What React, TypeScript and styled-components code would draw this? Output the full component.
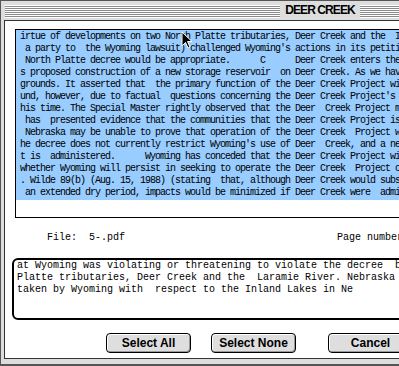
import styled, { createGlobalStyle } from "styled-components";

const GlobalStyle = createGlobalStyle`
  html, body {
    margin: 0;
    padding: 0;
    background: #ffffff;
    overflow: hidden;
  }
`;

// --- WINDOW FRAME ---
const Window = styled.div`
  width: 640px;
  height: 366px;
  box-sizing: border-box;
  background: #dddddd;
  border: 1px solid #555555;
  border-bottom-width: 2px;
  padding: 0 3px 5px 3px;
  display: flex;
  flex-direction: column;
`;

const TitleBar = styled.div`
  height: 19px;
  display: flex;
  align-items: center;
  padding: 0 1px;
`;

const Stripes = styled.div`
  flex: 1;
  height: 13px;
  margin-top: 1px;
  background: repeating-linear-gradient(
    to bottom,
    #ffffff 0px,
    #ffffff 1px,
    #8a8a8a 1px,
    #8a8a8a 2px
  );
`;

const Title = styled.div`
  padding: 0 5px;
  font-family: "Liberation Sans", Arial, sans-serif;
  font-weight: 700;
  font-size: 12px;
  letter-spacing: -0.9px;
  color: #000;
  line-height: 19px;
`;

const Content = styled.div`
  flex: 1;
  background: #ffffff;
  border: 1px solid #333333;
  display: flex;
  flex-direction: column;
  font-family: "Liberation Mono", "Courier New", monospace;
  font-size: 10px;
  color: #000;
`;

// --- FOUND TEXT PANEL ---
const TextPanel = styled.div`
  position: relative;
  margin: 8px 10px 0 10px;
  height: 189px;
  box-sizing: border-box;
  border: 1px solid #000;
  background: #ffffff;
`;

const Selection = styled.div`
  background: #99ccff;
  padding: 1px 0 1px 4px;
`;

const CondensedLine = styled.div`
  height: 12px;
  line-height: 12px;
  white-space: pre;
  letter-spacing: -1px;
`;

const Cursor = styled.svg`
  position: absolute;
  left: 165px;
  top: 1px;
`;

// --- FILE ROW ---
const FileRow = styled.div`
  display: flex;
  margin-top: 14px;
  padding-left: 42px;
  height: 12px;
  line-height: 12px;
  white-space: pre;
`;

const FileName = styled.span`
  width: 290px;
`;

// --- CONTEXT FIELD ---
const ContextBox = styled.div`
  margin: 14px 0 0 7px;
  width: 640px;
  height: 62px;
  box-sizing: border-box;
  border: 2px solid #000;
  border-radius: 6px;
  padding: 0 3px;
`;

const Line = styled.div`
  height: 12px;
  line-height: 12px;
  white-space: pre;
`;

// --- BUTTONS ---
const ButtonRow = styled.div`
  display: flex;
  margin-top: 13px;
  padding-left: 101px;
`;

const Button = styled.button<{ $gap?: number }>`
  width: 85px;
  height: 20px;
  margin-left: ${(p) => p.$gap ?? 0}px;
  padding: 0;
  border: 1px solid #000;
  border-radius: 4px;
  background: #dedede;
  box-shadow: inset 1px 1px 0 #ffffff, inset -1px -1px 0 #9a9a9a;
  font-family: "Liberation Sans", Arial, sans-serif;
  font-weight: 700;
  font-size: 12px;
  color: #000;
  line-height: 18px;
`;

const foundLines = [
  "irtue of developments on two North Platte tributaries, Deer Creek and the  I",
  " a party to  the Wyoming lawsuit) challenged Wyoming's actions in its petiti",
  " North Platte decree would be appropriate.      C      Deer Creek enters the",
  "s proposed construction of a new storage reservoir  on Deer Creek. As we hav",
  "grounds. It asserted that  the primary function of the Deer Creek Project wi",
  "und, however, due to factual  questions concerning the Deer Creek Project's",
  "his time. The Special Master rightly observed that the Deer  Creek Project m",
  " has  presented evidence that the communities that the Deer Creek Project is",
  " Nebraska may be unable to prove that operation of the Deer Creek  Project w",
  "he decree does not currently restrict Wyoming's use of Deer  Creek, and a ne",
  "t is  administered.      Wyoming has conceded that the Deer Creek Project wi",
  "whether Wyoming will persist in seeking to operate the Deer Creek  Project c",
  ". Wilde 89(b) (Aug. 15, 1988) (stating  that, although Deer Creek would subs",
  " an extended dry period, impacts would be minimized if Deer Creek were  admi",
];

const contextLines = [
  "at Wyoming was violating or threatening to violate the decree  b",
  "Platte tributaries, Deer Creek and the  Laramie River. Nebraska ",
  "taken by Wyoming with  respect to the Inland Lakes in Ne",
];

const App = () => {
  return (
    <>
      <GlobalStyle />
      <Window>
        <TitleBar>
          <Stripes />
          <Title>DEER CREEK</Title>
          <Stripes />
        </TitleBar>
        <Content>
          <TextPanel>
            <Selection>
              {foundLines.map((line, idx) => (
                <CondensedLine key={idx}>{line}</CondensedLine>
              ))}
            </Selection>
            <Cursor width="12" height="19" viewBox="0 0 12 19">
              <path
                d="M1 1 L1 15 L4.5 11.5 L7 17 L9 16 L6.5 10.5 L11 10.5 Z"
                fill="#000"
                stroke="#fff"
                strokeWidth="1"
              />
            </Cursor>
          </TextPanel>

          <FileRow>
            <FileName>File:  5-.pdf</FileName>
            <span>Page number</span>
          </FileRow>

          <ContextBox>
            {contextLines.map((line, idx) => (
              <Line key={idx}>{line}</Line>
            ))}
          </ContextBox>

          <ButtonRow>
            <Button>Select All</Button>
            <Button $gap={20}>Select None</Button>
            <Button $gap={32}>Cancel</Button>
          </ButtonRow>
        </Content>
      </Window>
    </>
  );
};

export default App;
